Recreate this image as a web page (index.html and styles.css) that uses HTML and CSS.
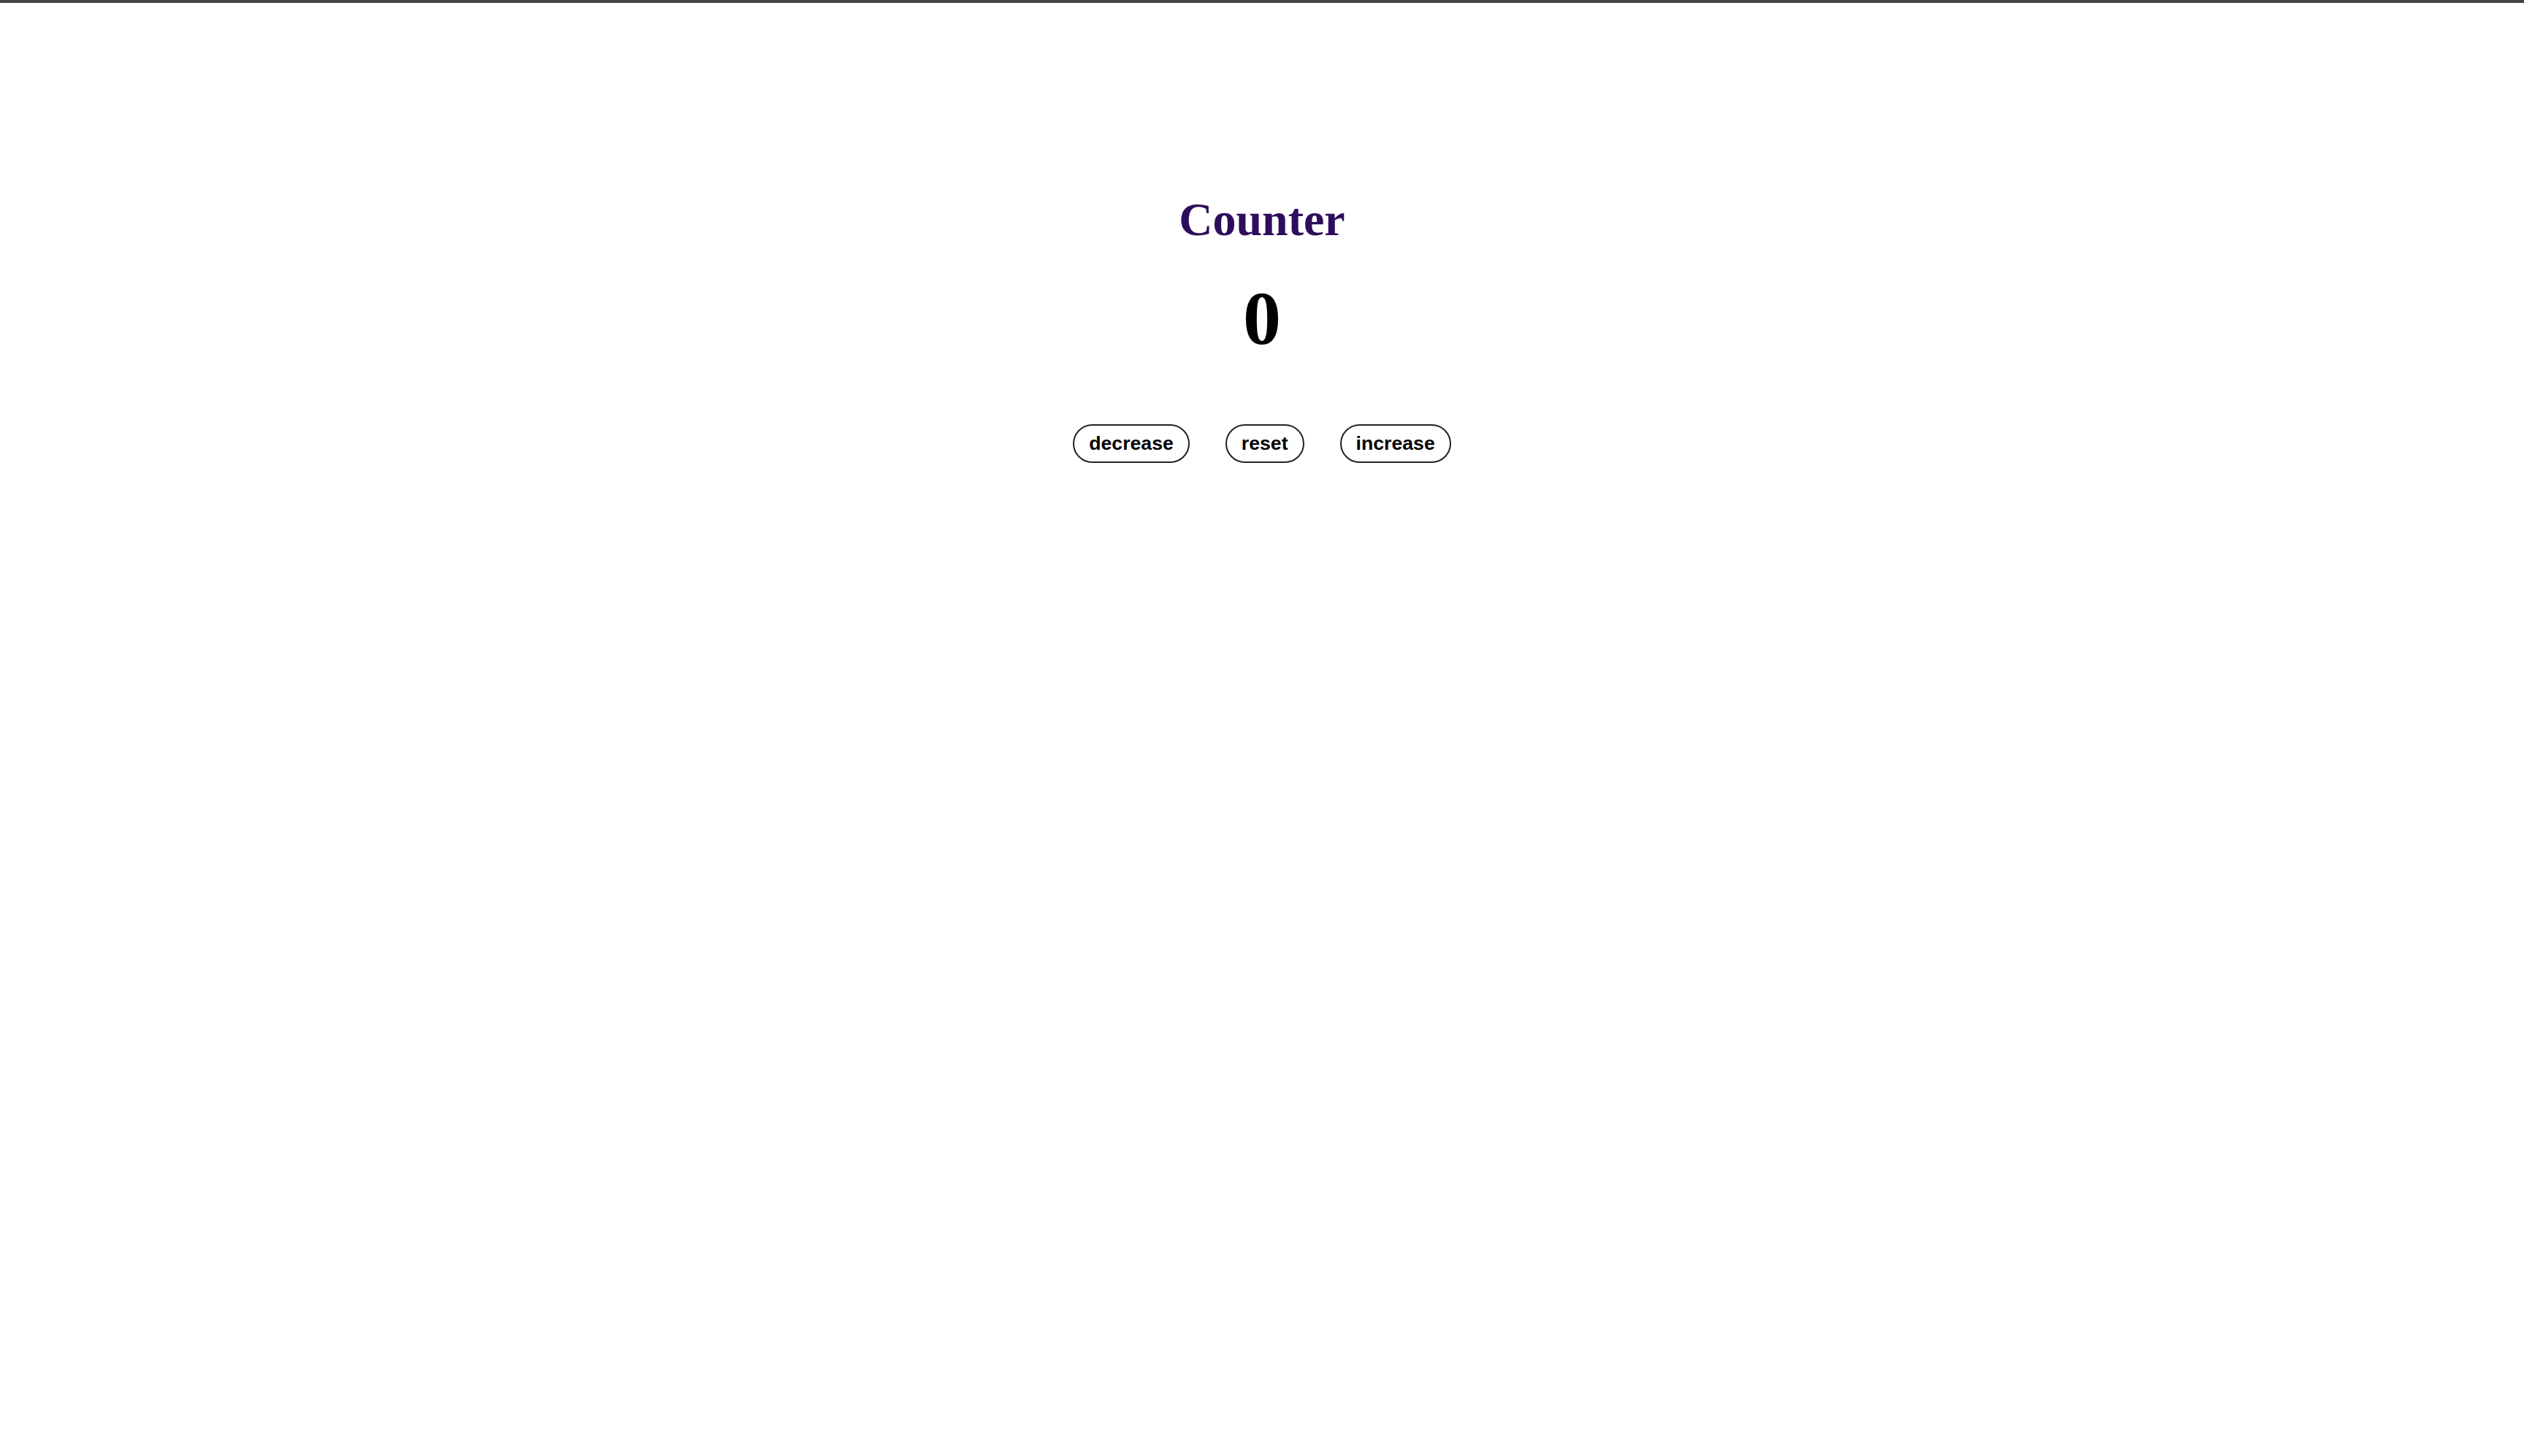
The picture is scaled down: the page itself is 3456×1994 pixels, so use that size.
FILE: index.html
```html
<!DOCTYPE html>
<html lang="en">
<head>
<meta charset="utf-8">
<title>Counter</title>
<link rel="stylesheet" href="styles.css">
</head>
<body>
<main class="counter">
  <h1 class="counter-title">Counter</h1>
  <div class="counter-value">0</div>
  <div class="counter-buttons">
    <button class="btn" type="button">decrease</button>
    <button class="btn" type="button">reset</button>
    <button class="btn" type="button">increase</button>
  </div>
</main>
</body>
</html>
```

FILE: styles.css
```css
html, body {
  margin: 0;
  padding: 0;
  background: #ffffff;
}

body {
  border-top: 4px solid #444444;
  min-height: 1990px;
  font-family: "Liberation Serif", "Times New Roman", serif;
}

.counter {
  display: flex;
  flex-direction: column;
  align-items: center;
  padding-top: 260px;
}

.counter-title {
  margin: 0;
  font-size: 64px;
  font-weight: bold;
  line-height: 1.15;
  color: #2e0d5c;
}

.counter-value {
  margin-top: 38px;
  font-size: 104px;
  font-weight: bold;
  line-height: 1.15;
  color: #000000;
}

.counter-buttons {
  display: flex;
  gap: 49px;
  margin-top: 86px;
}

.btn {
  font-family: "Liberation Sans", Arial, sans-serif;
  font-size: 26.67px;
  font-weight: bold;
  line-height: 1.15;
  color: #000000;
  background: #ffffff;
  border: 2px solid #222222;
  border-radius: 999px;
  padding: 9px 20px;
  margin: 0;
}
```
